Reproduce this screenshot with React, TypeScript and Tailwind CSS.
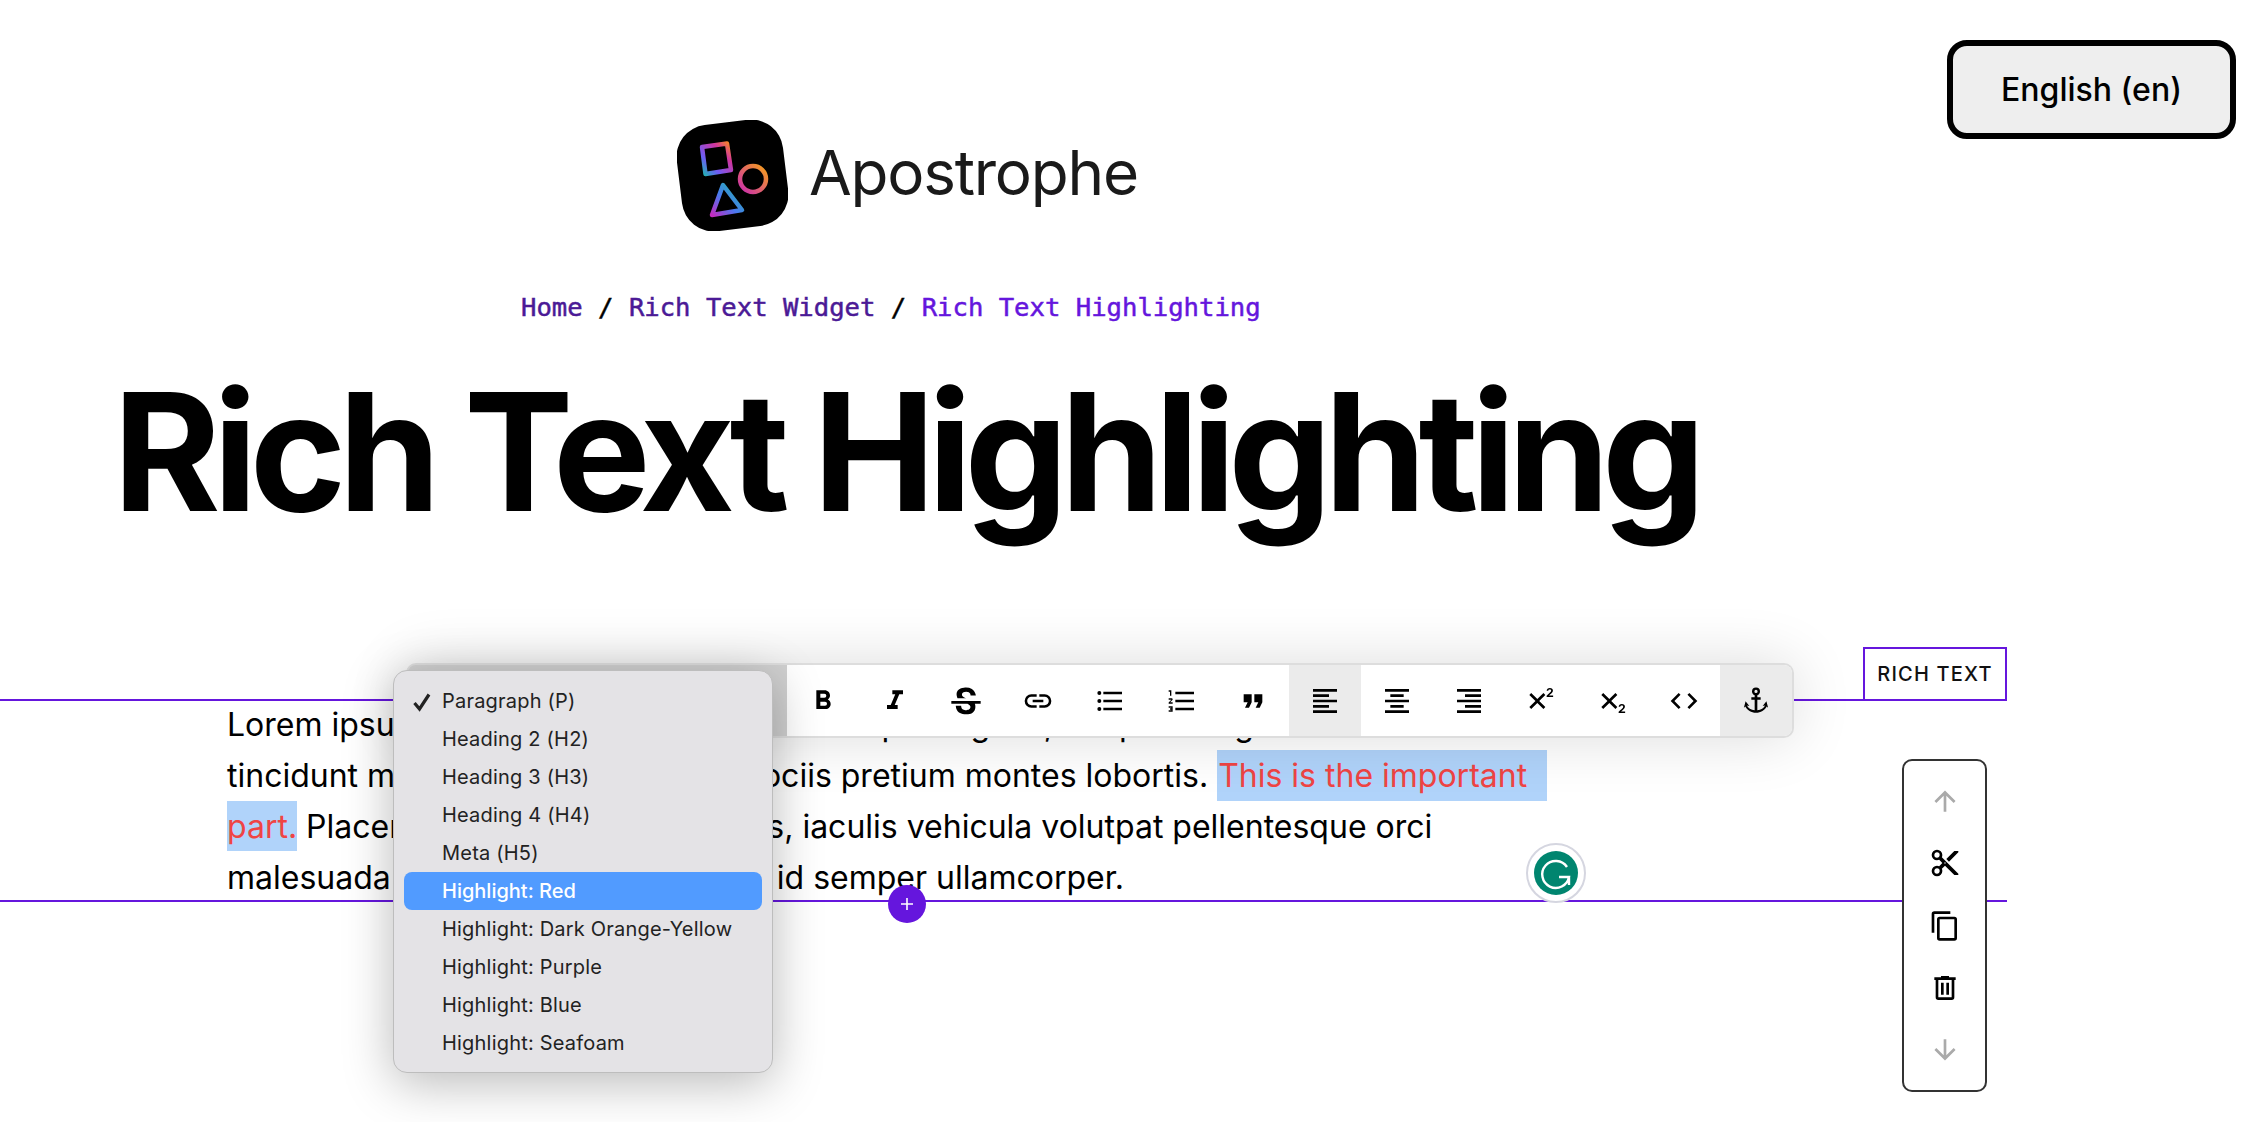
import React from 'react';

const toolbarIcons = [
  { name: 'bold', d: 'M13.5,15.5H10V12.5H13.5A1.5,1.5 0 0,1 15,14A1.5,1.5 0 0,1 13.5,15.5M10,6.5H13A1.5,1.5 0 0,1 14.5,8A1.5,1.5 0 0,1 13,9.5H10M15.6,10.79C16.57,10.11 17.25,9 17.25,8C17.25,5.74 15.5,4 13.25,4H7V18H14.04C16.14,18 17.75,16.3 17.75,14.21C17.75,12.69 16.89,11.39 15.6,10.79Z' },
  { name: 'italic', d: 'M10,4V7H12.21L8.79,15H6V18H14V15H11.79L15.21,7H18V4H10Z' },
  { name: 'strike', d: 'M23,12V14H18.61C19.61,16.14 19.56,22 12.38,22C4.05,22.05 4.37,15.5 4.37,15.5L8.34,15.55C8.37,18.92 11.5,18.92 12.12,18.88C12.76,18.83 15.15,18.84 15.34,16.5C15.42,15.41 14.32,14.58 13.12,14H1V12H23M19.41,7.89L15.43,7.86C15.43,7.86 15.6,5.09 12.15,5.08C8.7,5.06 9,7.28 9,7.56C9.04,7.84 9.34,9.22 12,9.88H5.71C5.71,9.88 2.22,3 10.47,2C18.72,1 19.41,7.89 19.41,7.89Z' },
  { name: 'link', d: 'M3.9,12C3.9,10.29 5.29,8.9 7,8.9H11V7H7A5,5 0 0,0 2,12A5,5 0 0,0 7,17H11V15.1H7C5.29,15.1 3.9,13.71 3.9,12M8,13H16V11H8V13M17,7H13V8.9H17C18.71,8.9 20.1,10.29 20.1,12C20.1,13.71 18.71,15.1 17,15.1H13V17H17A5,5 0 0,0 22,12A5,5 0 0,0 17,7Z' },
  { name: 'bullets', d: 'M7,5H21V7H7V5M7,13V11H21V13H7M4,4.5A1.5,1.5 0 0,1 5.5,6A1.5,1.5 0 0,1 4,7.5A1.5,1.5 0 0,1 2.5,6A1.5,1.5 0 0,1 4,4.5M4,10.5A1.5,1.5 0 0,1 5.5,12A1.5,1.5 0 0,1 4,13.5A1.5,1.5 0 0,1 2.5,12A1.5,1.5 0 0,1 4,10.5M7,19V17H21V19H7M4,16.5A1.5,1.5 0 0,1 5.5,18A1.5,1.5 0 0,1 4,19.5A1.5,1.5 0 0,1 2.5,18A1.5,1.5 0 0,1 4,16.5Z' },
  { name: 'numbers', d: 'M7,13V11H21V13H7M7,19V17H21V19H7M7,7V5H21V7H7M3,8V5H2V4H4V8H3M2,17V16H5V20H2V19H4V18.5H3V17.5H4V17H2M4.25,10A0.75,0.75 0 0,1 5,10.75C5,10.95 4.92,11.14 4.79,11.27L3.12,13H5V14H2V13.08L4,11H2V10H4.25Z' },
  { name: 'quote', d: 'M14,17H17L19,13V7H13V13H16M6,17H9L11,13V7H5V13H8L6,17Z' },
  { name: 'left', active: true, d: 'M3,3H21V5H3V3M3,7H15V9H3V7M3,11H21V13H3V11M3,15H15V17H3V15M3,19H21V21H3V19Z' },
  { name: 'center', d: 'M3,3H21V5H3V3M7,7H17V9H7V7M3,11H21V13H3V11M7,15H17V17H7V15M3,19H21V21H3V19Z' },
  { name: 'right', d: 'M3,3H21V5H3V3M9,7H21V9H9V7M3,11H21V13H3V11M9,15H21V17H9V15M3,19H21V21H3V19Z' },
  { name: 'sup', d: 'M16,7.41L11.41,12L16,16.59L14.59,18L10,13.41L5.41,18L4,16.59L8.59,12L4,7.41L5.41,6L10,10.59L14.59,6L16,7.41M21.85,9H16.97V8L18.1,6.9C19.2,5.9 20.4,5.1 20.4,4.2C20.4,3.7 20,3.3 19.3,3.3C18.7,3.3 18.2,3.7 18.2,4.3H17C17,3 18,2.2 19.4,2.2C20.8,2.2 21.7,3 21.7,4.1C21.7,5.3 20.6,6.2 19.5,7.2L18.8,7.9H21.85V9Z' },
  { name: 'sub', d: 'M16,7.41L11.41,12L16,16.59L14.59,18L10,13.41L5.41,18L4,16.59L8.59,12L4,7.41L5.41,6L10,10.59L14.59,6L16,7.41M21.85,21.03H16.97V20.03L18.1,18.93C19.2,17.93 20.4,17.13 20.4,16.23C20.4,15.73 20,15.33 19.3,15.33C18.7,15.33 18.2,15.73 18.2,16.33H17C17,15.03 18,14.23 19.4,14.23C20.8,14.23 21.7,15.03 21.7,16.13C21.7,17.33 20.6,18.23 19.5,19.23L18.8,19.93H21.85V21.03Z' },
  { name: 'code', d: 'M14.6,16.6L19.2,12L14.6,7.4L16,6L22,12L16,18L14.6,16.6M9.4,16.6L4.8,12L9.4,7.4L8,6L2,12L8,18L9.4,16.6Z' },
  { name: 'anchor', active: true, d: 'M12,1.8A3,3 0 0,0 9,4.8C9,6.1 9.8,7.2 11,7.6V9.2H8.5V11H11V19C8.3,18.7 6,17.2 5.2,15.3L7,15.8L4.2,12.2L2.9,17L4,16.2C5.3,19 8.5,20.9 12,20.9C15.5,20.9 18.7,19 20,16.2L21.1,17L19.8,12.2L17,15.8L18.8,15.3C18,17.2 15.7,18.7 13,19V11H15.5V9.2H13V7.6C14.2,7.2 15,6.1 15,4.8A3,3 0 0,0 12,1.8M12,3.6A1.2,1.2 0 0,1 13.2,4.8A1.2,1.2 0 0,1 12,6A1.2,1.2 0 0,1 10.8,4.8A1.2,1.2 0 0,1 12,3.6Z' },
];

const styleOptions = [
  'Paragraph (P)',
  'Heading 2 (H2)',
  'Heading 3 (H3)',
  'Heading 4 (H4)',
  'Meta (H5)',
  'Highlight: Red',
  'Highlight: Dark Orange-Yellow',
  'Highlight: Purple',
  'Highlight: Blue',
  'Highlight: Seafoam',
];

const controls = [
  { name: 'up', muted: true, d: 'M13,20H11V8L5.5,13.5L4.08,12.08L12,4.16L19.92,12.08L18.5,13.5L13,8V20Z' },
  { name: 'cut', d: 'M19,3L13,9L15,11L22,4V3M12,12.5A0.5,0.5 0 0,1 11.5,12A0.5,0.5 0 0,1 12,11.5A0.5,0.5 0 0,1 12.5,12A0.5,0.5 0 0,1 12,12.5M6,20A2,2 0 0,1 4,18C4,16.89 4.9,16 6,16A2,2 0 0,1 8,18C8,19.11 7.1,20 6,20M6,8A2,2 0 0,1 4,6C4,4.89 4.9,4 6,4A2,2 0 0,1 8,6C8,7.11 7.1,8 6,8M9.64,7.64C9.87,7.14 10,6.59 10,6A4,4 0 0,0 6,2A4,4 0 0,0 2,6A4,4 0 0,0 6,10C6.59,10 7.14,9.87 7.64,9.64L10,12L7.64,14.36C7.14,14.13 6.59,14 6,14A4,4 0 0,0 2,18A4,4 0 0,0 6,22A4,4 0 0,0 10,18C10,17.41 9.87,16.86 9.64,16.36L12,14L19,21H22V20L9.64,7.64Z' },
  { name: 'copy', d: 'M19,21H8V7H19M19,5H8A2,2 0 0,0 6,7V21A2,2 0 0,0 8,23H19A2,2 0 0,0 21,21V7A2,2 0 0,0 19,5M16,1H4A2,2 0 0,0 2,3V17H4V3H16V1Z' },
  { name: 'trash', d: 'M9,3V4H4V6H5V19A2,2 0 0,0 7,21H17A2,2 0 0,0 19,19V6H20V4H15V3H9M7,6H17V19H7V6M9,8V17H11V8H9M13,8V17H15V8H13Z' },
  { name: 'down', muted: true, d: 'M11,4H13V16L18.5,10.5L19.92,11.92L12,19.84L4.08,11.92L5.5,10.5L11,16V4Z' },
];

const Logo: React.FC = () => (
  <svg viewBox="0 0 111 111" className="h-[111px] w-[111px] shrink-0">
    <defs>
      <linearGradient id="logoSquare" x1="1" y1="0" x2="0" y2="1">
        <stop offset="0" stopColor="#fb8a1e" />
        <stop offset="0.3" stopColor="#d0359f" />
        <stop offset="0.7" stopColor="#6d5cf5" />
        <stop offset="1" stopColor="#1fb6b0" />
      </linearGradient>
      <linearGradient id="logoCircle" x1="1" y1="0" x2="0" y2="1">
        <stop offset="0" stopColor="#f7a01a" />
        <stop offset="1" stopColor="#c92bb0" />
      </linearGradient>
      <linearGradient id="logoTriangle" x1="1" y1="0" x2="0" y2="1">
        <stop offset="0" stopColor="#18c0a0" />
        <stop offset="0.55" stopColor="#4a78f0" />
        <stop offset="1" stopColor="#c42bc0" />
      </linearGradient>
    </defs>
    <rect x="2" y="2" width="107" height="107" rx="32" transform="rotate(-7 55.5 55.5)" fill="#000" />
    <path d="M25 27 L50 23.5 L54 50 L28.5 54Z" fill="none" stroke="url(#logoSquare)" strokeWidth="4.5" strokeLinejoin="round" />
    <circle cx="76" cy="59" r="13" fill="none" stroke="url(#logoCircle)" strokeWidth="4.5" />
    <path d="M46 65 L65 90 L35 95Z" fill="none" stroke="url(#logoTriangle)" strokeWidth="4.5" strokeLinejoin="round" />
  </svg>
);

export default function App() {
  return (
    <div className="relative h-[1122px] w-[2260px] overflow-hidden bg-white font-['Inter',sans-serif] text-black">
      {/* Locale switcher */}
      <button className="absolute right-[24px] top-[40px] flex h-[99px] w-[289px] items-center justify-center rounded-[20px] border-[6px] border-black bg-[#eeeeee] text-[32px] font-medium">
        English (en)
      </button>

      <header className="flex items-center gap-[21px] pl-[677px] pt-[120px]">
        <Logo />
        <span className="pb-[6px] text-[62px] leading-none tracking-[-0.02em] text-[#1a1a1a]">Apostrophe</span>
      </header>

      <nav className="ml-[521px] mt-[60px] font-['DejaVu_Sans_Mono',monospace] text-[25.6px] leading-[32px] [-webkit-text-stroke:0.5px]">
        <span className="text-[#4b1a96]">Home</span>
        <span> / </span>
        <span className="text-[#4b1a96]">Rich Text Widget</span>
        <span> / </span>
        <span className="text-[#6516dd]">Rich Text Highlighting</span>
      </nav>

      <h1 className="ml-[113px] mt-[29px] h-[200px] whitespace-nowrap text-[164px] font-bold leading-[200px] tracking-[-0.047em]">
        Rich Text Highlighting
      </h1>

      {/* Focused rich text widget */}
      <section className="relative mt-[147px] h-[203px] w-[2007px] border-y-2 border-[#6516dd]">
        <div className="-mt-[2px] pl-[227px] text-[32px] leading-[51px]">
          <p className="whitespace-nowrap">Lorem ipsum dolor sit amet consectetur adipiscing elit, tempor integer.</p>
          <p className="whitespace-nowrap">
            tincidunt mauris nibh nisl natoque sociis pretium montes lobortis.{' '}
            <span className="inline-block h-[51px] w-[330px] bg-[#b0d3fa] pl-[1px] text-[#ef4444]">This is the important</span>
          </p>
          <p className="whitespace-nowrap">
            <span className="inline-block h-[50px] bg-[#b0d3fa] text-[#ef4444]">part.</span> Placerat tempor sagittis dolores, iaculis vehicula volutpat pellentesque orci
          </p>
          <p className="whitespace-nowrap">malesuada fames ac ante ipsum est id semper ullamcorper.</p>
        </div>

        {/* Grammarly badge */}
        <svg viewBox="0 0 60 60" className="absolute left-[1526px] top-[142px] h-[60px] w-[60px]">
          <circle cx="30" cy="30" r="29" fill="#fff" stroke="#d5d6e0" strokeWidth="2" />
          <circle cx="30" cy="30" r="22" fill="#00856f" />
          <path d="M41 24 A13.5 13.5 0 1 0 43 34 L33 34 M43 34 L43 42" fill="none" stroke="#fff" strokeWidth="2.4" />
        </svg>

        {/* Add content */}
        <button className="absolute left-[888px] top-[184px] flex h-[38px] w-[38px] items-center justify-center rounded-full bg-[#6516dd]">
          <svg viewBox="0 0 16 16" className="h-[16px] w-[16px]">
            <path d="M8 2V14M2 8H14" stroke="#fff" strokeWidth="1.6" />
          </svg>
        </button>

        <div className="absolute right-0 top-[-54px] flex h-[52px] w-[144px] items-center justify-center border-2 border-b-0 border-[#6516dd] bg-white text-[20px] font-medium tracking-[0.06em] text-[#111]">
          RICH TEXT
        </div>

        {/* Toolbar */}
        <div className="absolute left-[406px] top-[-38px] flex h-[75px] overflow-hidden rounded-[10px] border-2 border-[#dddddd] bg-[#d0d0d0] shadow-[0_0_60px_rgba(0,0,0,0.14)]">
          <div className="w-[379px]" />
          <div className="flex bg-white">
            {toolbarIcons.map((icon) => (
              <div key={icon.name} className={`flex h-full w-[71.75px] items-center justify-center ${icon.active ? 'bg-[#ebebeb]' : ''}`}>
                <svg viewBox="0 0 24 24" className="h-[32px] w-[32px] fill-black">
                  <path d={icon.d} />
                </svg>
              </div>
            ))}
          </div>
        </div>

        {/* Style dropdown */}
        <ul className="absolute left-[393px] top-[-31px] h-[403px] w-[380px] rounded-[14px] border border-[#bdbdbd] bg-[#e4e3e6] px-[10px] pt-[11px] text-[20px] text-[#222222] shadow-[0_10px_50px_rgba(0,0,0,0.28)]">
          {styleOptions.map((label, i) => (
            <li key={label} className={`relative flex h-[38px] items-center rounded-[8px] pl-[38px] tracking-[0.01em] ${i === 5 ? 'bg-[#519bff] font-medium tracking-normal text-white' : ''}`}>
              {i === 0 && (
                <svg viewBox="0 0 20 20" className="absolute left-[8px] top-[10px] h-[20px] w-[20px]">
                  <path d="M2.5 11L7.5 17L17 2.5" fill="none" stroke="#222" strokeWidth="3.2" />
                </svg>
              )}
              {label}
            </li>
          ))}
        </ul>

        {/* Widget controls */}
        <div className="absolute left-[1902px] top-[58px] flex h-[333px] w-[85px] flex-col items-center justify-between rounded-[10px] border-2 border-[#333333] bg-white py-[24px]">
          {controls.map((c) => (
            <svg key={c.name} viewBox="0 0 24 24" className={`h-[32px] w-[32px] ${c.muted ? 'fill-[#aaaaaa]' : 'fill-black'}`}>
              <path d={c.d} />
            </svg>
          ))}
        </div>
      </section>
    </div>
  );
}
